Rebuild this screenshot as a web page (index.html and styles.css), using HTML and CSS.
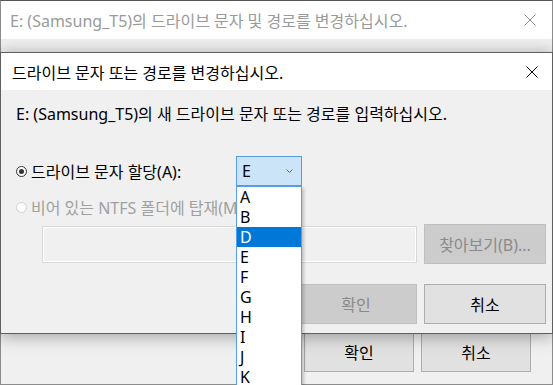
FILE: index.html
```html
<!DOCTYPE html>
<html lang="ko">
<head>
    <meta charset="UTF-8">
    <title>드라이브 문자 및 경로 변경</title>
    <link rel="stylesheet" href="styles.css">
</head>
<body>
    <!-- parent dialog, inactive -->
    <div class="window back">
        <div class="titlebar">
            <span class="title">E: (Samsung_T5)의 드라이브 문자 및 경로를 변경하십시오.</span>
            <svg class="close" width="12" height="12" viewBox="0 0 12 12"><path d="M0.5 0.5L11.5 11.5M11.5 0.5L0.5 11.5" stroke="#8a8a8a" stroke-width="1"/></svg>
        </div>
        <div class="client">
            <div class="actions">
                <button class="btn small">확인</button>
                <button class="btn small">취소</button>
            </div>
        </div>
    </div>

    <!-- child dialog, active -->
    <div class="window front">
        <div class="titlebar">
            <span class="title">드라이브 문자 또는 경로를 변경하십시오.</span>
            <svg class="close" width="12" height="12" viewBox="0 0 12 12"><path d="M0.5 0.5L11.5 11.5M11.5 0.5L0.5 11.5" stroke="#000" stroke-width="1"/></svg>
        </div>
        <div class="client">
            <p class="message">E: (Samsung_T5)의 새 드라이브 문자 또는 경로를 입력하십시오.</p>

            <div class="option">
                <label class="radio"><span class="dot checked"></span>드라이브 문자 할당(A):</label>
                <div class="combo">
                    <span class="combo-value">E</span>
                    <svg class="chevron" width="7" height="4" viewBox="0 0 7 4"><path d="M0.5 0.5L3.5 3.5L6.5 0.5" fill="none" stroke="#666" stroke-width="1"/></svg>
                    <ul class="listbox">
                        <li>A</li>
                        <li>B</li>
                        <li class="selected">D</li>
                        <li>E</li>
                        <li>F</li>
                        <li>G</li>
                        <li>H</li>
                        <li>I</li>
                        <li>J</li>
                        <li>K</li>
                    </ul>
                </div>
            </div>

            <div class="option disabled">
                <label class="radio"><span class="dot"></span>비어 있는 NTFS 폴더에 탑재(M):</label>
            </div>

            <div class="path-row">
                <div class="textbox"></div>
                <button class="btn" disabled>찾아보기(B)...</button>
            </div>

            <div class="actions">
                <button class="btn" disabled>확인</button>
                <button class="btn">취소</button>
            </div>
        </div>
    </div>
</body>
</html>
```

FILE: styles.css
```css
body {
    margin: 0;
    width: 553px;
    height: 385px;
    overflow: hidden;
    position: relative;
    background-color: #2b2b2b;
    font-family: "Noto Sans", "Noto Sans CJK KR", sans-serif;
    font-size: 16px;
    color: #000;
}

.window {
    position: absolute;
    left: 0;
    box-sizing: border-box;
    display: flex;
    flex-direction: column;
    background-color: #f0f0f0;
}

.back {
    top: 0;
    width: 553px;
    height: 385px;
    border: 1px solid #8c8c8c;
    border-top-color: #555;
}

.front {
    top: 52px;
    width: 553px;
    height: 282px;
    border: 1px solid #5f5f5f;
    box-shadow: 0 2px 16px rgba(0, 0, 0, 0.35);
}

.titlebar {
    background-color: #fff;
    display: flex;
    align-items: center;
    justify-content: space-between;
    flex-shrink: 0;
}

.back .titlebar {
    height: 38px;
    padding: 0 16px 0 9px;
    color: #9a9a9a;
}

.front .titlebar {
    height: 37px;
    padding: 0 14px 0 11px;
}

.client {
    flex: 1;
    display: flex;
    flex-direction: column;
}

.back .client {
    padding: 0 21px 12px 0;
}

.back .actions {
    margin-top: auto;
}

.front .client {
    padding: 14px 6px 0 15px;
}

.message {
    margin: 0;
    line-height: 20px;
}

.option {
    display: flex;
    align-items: center;
    margin-top: 11px;
    height: 20px;
}

.option:first-of-type {
    margin-top: 32px;
    height: 30px;
}

.option.disabled {
    color: #a0a0a0;
}

.radio {
    width: 220px;
    display: flex;
    align-items: center;
    white-space: nowrap;
}

.dot {
    width: 11px;
    height: 11px;
    box-sizing: border-box;
    border: 1px solid #333;
    border-radius: 50%;
    background-color: #fff;
    margin-right: 4px;
    position: relative;
    flex-shrink: 0;
}

.dot.checked::after {
    content: "";
    position: absolute;
    left: 2px;
    top: 2px;
    width: 5px;
    height: 5px;
    border-radius: 50%;
    background-color: #333;
}

.option.disabled .dot {
    border-color: #d0d0d0;
}

.combo {
    position: relative;
    z-index: 5;
    width: 66px;
    height: 30px;
    box-sizing: border-box;
    border: 1px solid #569de5;
    background-color: #cce4f7;
    display: flex;
    align-items: center;
    justify-content: space-between;
    padding: 0 8px 0 5px;
}

.listbox {
    position: absolute;
    left: -1px;
    top: 29px;
    width: 66px;
    box-sizing: border-box;
    margin: 0;
    padding: 0;
    list-style: none;
    background-color: #fff;
    border: 1px solid #5aa0e6;
    box-shadow: 2px 2px 3px rgba(0, 0, 0, 0.2);
}

.listbox li {
    height: 20px;
    line-height: 20px;
    padding-left: 3px;
}

.listbox li.selected {
    background-color: #0078d7;
    color: #fff;
}

.path-row {
    display: flex;
    align-items: center;
    gap: 7px;
    margin-top: 7px;
    height: 40px;
}

.textbox {
    width: 375px;
    height: 37px;
    box-sizing: border-box;
    margin-left: 26px;
    border: 1px solid #d9d9d9;
    box-shadow: inset 0 0 0 1px #fff;
}

.actions {
    display: flex;
    justify-content: flex-end;
    gap: 7px;
}

.front .actions {
    margin-top: 20px;
}

.btn {
    width: 122px;
    height: 40px;
    box-sizing: border-box;
    border: 1px solid #adadad;
    background-color: #e1e1e1;
    font-family: inherit;
    font-size: 16px;
    color: #000;
    padding: 0;
}

.btn.small {
    width: 110px;
}

.btn:disabled {
    background-color: #cccccc;
    border-color: #bfbfbf;
    color: #8a8a8a;
}
```
